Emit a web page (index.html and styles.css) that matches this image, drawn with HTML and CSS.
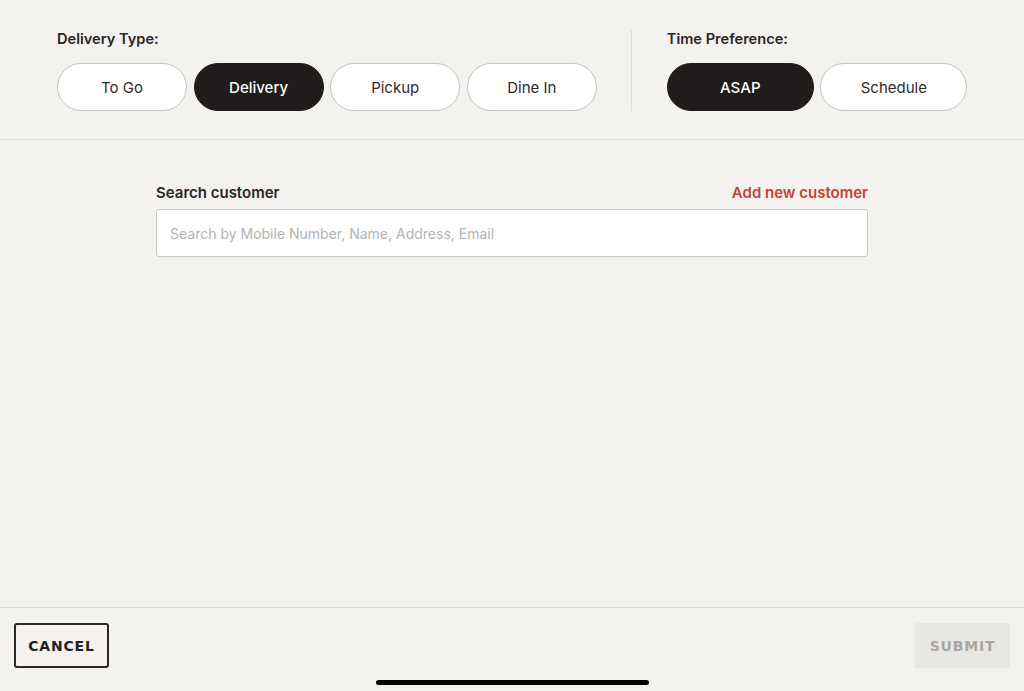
FILE: index.html
```html
<!DOCTYPE html>
<html>
<head>
<meta charset="utf-8">
<link rel="stylesheet" href="styles.css">
</head>
<body>
<div class="app">
  <header class="top">
    <div class="group group-type">
      <div class="group-label">Delivery Type:</div>
      <div class="pills">
        <button class="pill">To Go</button>
        <button class="pill active">Delivery</button>
        <button class="pill">Pickup</button>
        <button class="pill">Dine In</button>
      </div>
    </div>
    <div class="vdivider"></div>
    <div class="group group-time">
      <div class="group-label">Time Preference:</div>
      <div class="pills">
        <button class="pill wide active">ASAP</button>
        <button class="pill wide">Schedule</button>
      </div>
    </div>
  </header>
  <main class="content">
    <div class="search">
      <div class="search-head">
        <span class="search-label">Search customer</span>
        <a class="add-link">Add new customer</a>
      </div>
      <div class="search-input">Search by Mobile Number, Name, Address, Email</div>
    </div>
  </main>
  <footer class="bottom">
    <button class="btn-cancel">CANCEL</button>
    <button class="btn-submit">SUBMIT</button>
  </footer>
  <div class="home-indicator"></div>
</div>
</body>
</html>
```
FILE: styles.css
```css
* { box-sizing: border-box; }
html, body { margin: 0; padding: 0; }
body {
  background: #f3f2ef;
  font-family: Inter, "Liberation Sans", sans-serif;
  color: #231f1e;
  width: 1024px;
  height: 691px;
  overflow: hidden;
}
.app {
  position: relative;
  height: 691px;
  display: flex;
  flex-direction: column;
}
.top {
  display: flex;
  align-items: flex-start;
  padding: 29px 0 28px 57px;
  border-bottom: 1px solid #e1dfdb;
}
.group-label {
  font-size: 14.6px;
  font-weight: 600;
  line-height: 20px;
  margin-bottom: 14px;
  color: #2a2625;
}
.pills { display: flex; gap: 6.6px; }
.pill {
  width: 130px;
  height: 48px;
  border-radius: 24px;
  border: 1px solid #c6c3be;
  background: #fff;
  font-family: Inter, "Liberation Sans", sans-serif;
  font-size: 15px;
  color: #2f2b2a;
  padding: 0;
}
.pill.wide { width: 147px; }
.pill.active {
  background: #201c1b;
  border-color: #201c1b;
  color: #fff;
  font-weight: 500;
}
.vdivider {
  width: 1px;
  height: 81px;
  background: #dedcd8;
  margin: 1px 35px 0 34px;
}
.content {
  flex: 1;
  display: flex;
  justify-content: center;
  padding-top: 42px;
}
.search { width: 712px; }
.search-head {
  display: flex;
  justify-content: space-between;
  align-items: center;
  height: 20px;
  margin-bottom: 7px;
}
.search-label { font-size: 15px; font-weight: 600; color: #2a2625; }
.add-link { font-size: 15px; font-weight: 600; color: #c8412f; }
.search-input {
  height: 48px;
  background: #fff;
  border: 1px solid #c9c7c3;
  border-radius: 3px;
  padding: 0 13px;
  display: flex;
  align-items: center;
  font-size: 14px;
  color: #b5b3b0;
}
.bottom {
  height: 84px;
  border-top: 1px solid #dcdad6;
  display: flex;
  justify-content: space-between;
  align-items: flex-start;
  padding: 15px 14px 0 14px;
}
.btn-cancel, .btn-submit {
  font-family: "DejaVu Sans", "Liberation Sans", sans-serif;
  font-weight: 800;
  font-size: 14px;
  letter-spacing: 0.8px;
  height: 45px;
  width: 95px;
  padding: 0;
}
.btn-cancel {
  background: transparent;
  border: 2px solid #2a2625;
  border-radius: 3px;
  color: #231f1e;
}
.btn-submit {
  background: #e8e7e4;
  border: none;
  border-radius: 2px;
  color: #a8a6a3;
}
.home-indicator {
  position: absolute;
  left: 376px;
  bottom: 6px;
  width: 273px;
  height: 5px;
  border-radius: 3px;
  background: #000;
}
```
